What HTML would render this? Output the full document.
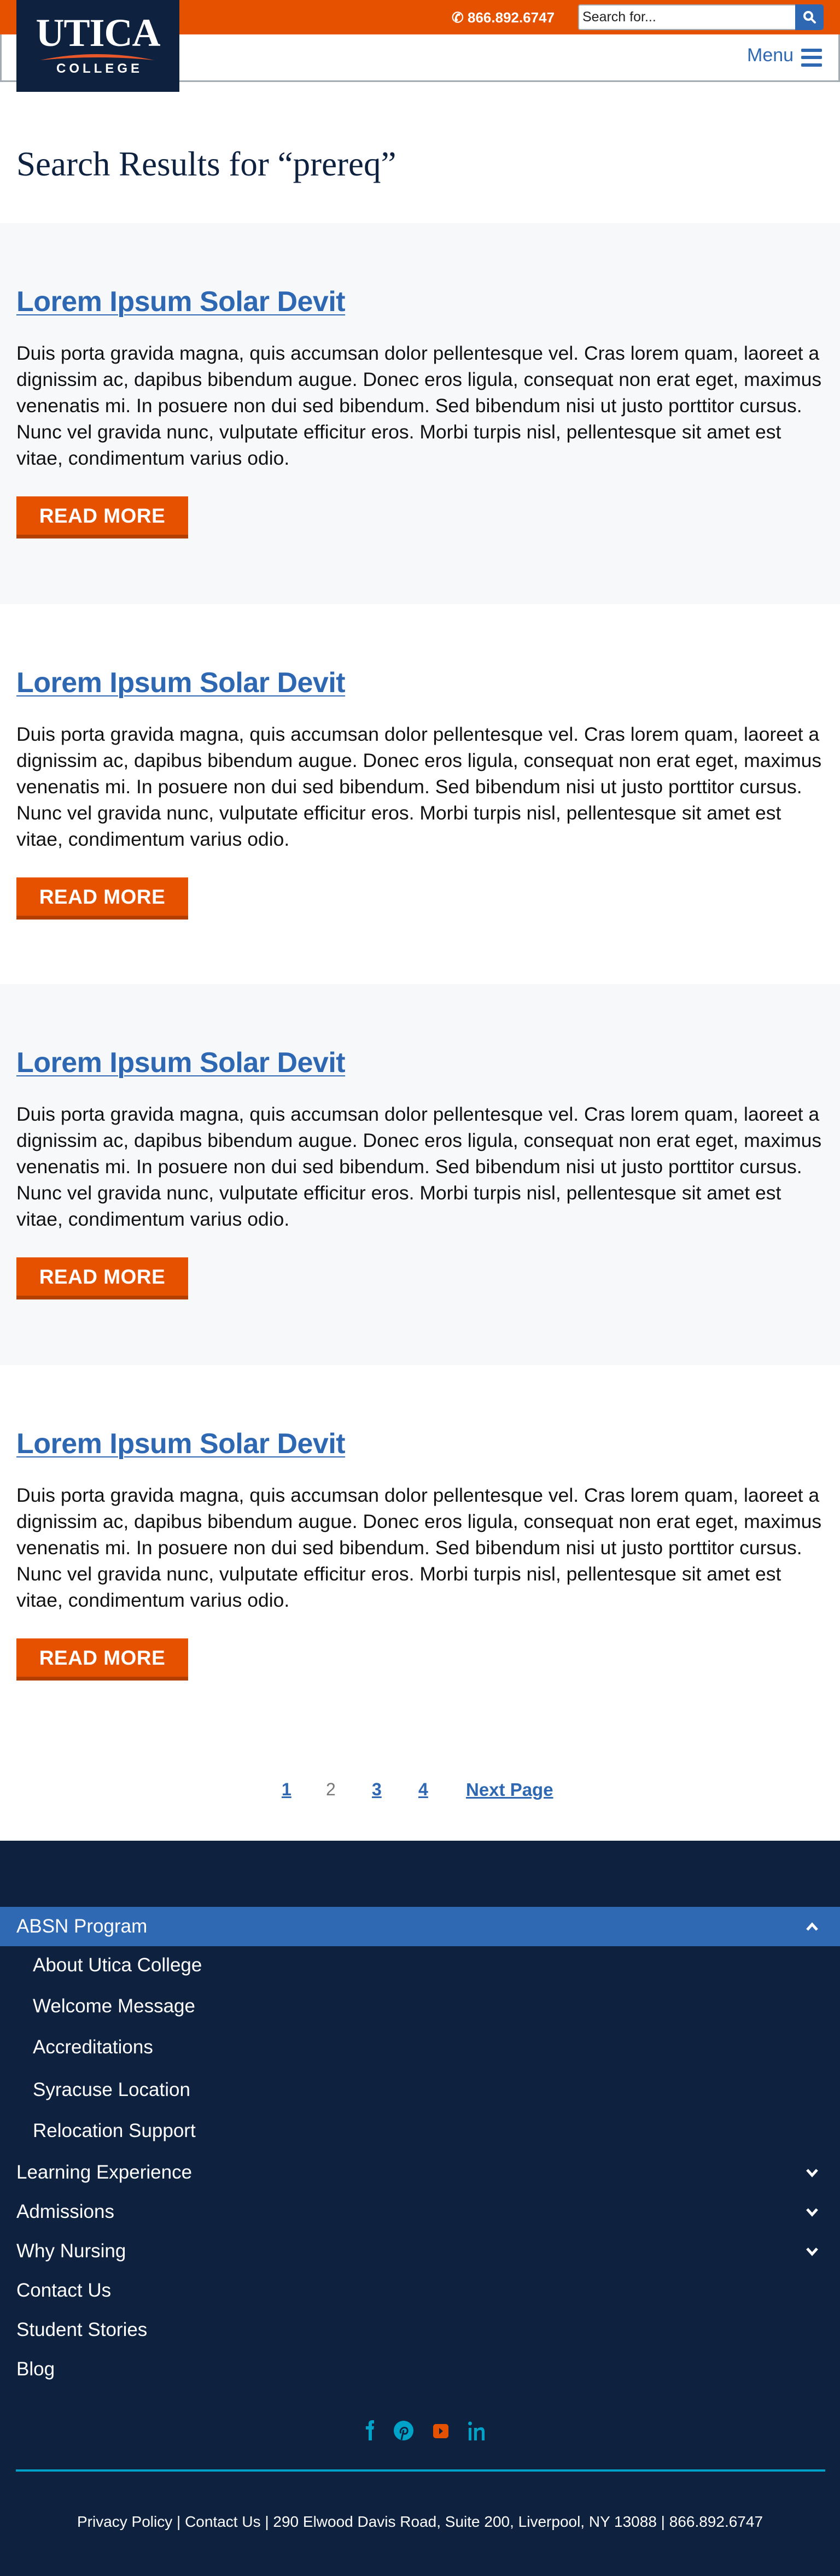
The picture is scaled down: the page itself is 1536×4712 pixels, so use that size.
<!DOCTYPE html>
<html><head><meta charset="utf-8"><style>
*{margin:0;padding:0;box-sizing:border-box}
body{width:1536px;height:4712px;font-family:"Liberation Sans",sans-serif;background:#fff;position:relative;overflow:hidden}
.a{position:absolute}
.top{left:0;top:0;width:1536px;height:63px;background:#e65100}
.nav{left:0;top:63px;width:1536px;height:87px;background:#fff;border:3px solid #a3acb3;border-top:none}
.logo{left:30px;top:0;width:298px;height:168px;background:#0e2240}
.sec{left:0;width:1536px;height:697px}
.gray{background:#f7f8fa}
h2{position:absolute;left:30px;font-size:52px;font-weight:bold;color:#2f68b2;text-decoration:underline;text-decoration-thickness:2px;text-underline-offset:6px;letter-spacing:-0.5px}
.p{position:absolute;left:30px;font-size:35.5px;line-height:48px;color:#111;white-space:nowrap;letter-spacing:0}
.btn{position:absolute;left:30px;width:314px;height:77px;background:#e65100;border-bottom:7px solid #b33f00;color:#fff;font-size:37px;font-weight:bold;line-height:72px;text-align:center;letter-spacing:0.5px}
.f{position:absolute;color:#fff;font-size:35px;line-height:40px}
.chev{position:absolute;left:1470px;width:30px;height:20px}
</style></head><body>
<div class="a top"></div>
<div class="a nav"></div>
<div class="a" style="left:826px;top:17px;color:#fff;font-size:26px;font-weight:bold">&#9990; 866.892.6747</div>
<div class="a" style="left:1057px;top:8px;width:400px;height:47px;background:#fff;border:2px solid #a3acb3;border-radius:4px 0 0 4px;font-size:25px;line-height:43px;padding-left:6px;color:#222">Search for...</div>
<div class="a" style="left:1454px;top:8px;width:52px;height:47px;background:#2f68b2;border-radius:0 5px 5px 0"></div>
<svg class="a" style="left:1466px;top:18px" width="30" height="28" viewBox="0 0 30 28"><circle cx="12" cy="11" r="7" fill="none" stroke="#fff" stroke-width="4"/><path d="M17 16l7 7" stroke="#fff" stroke-width="4" stroke-linecap="round"/></svg>
<div class="a" style="left:1366px;top:82px;font-size:34px;color:#2f68b2">Menu</div>
<div class="a" style="left:1465px;top:89px;width:38px;height:6px;background:#2f68b2;border-radius:2px"></div>
<div class="a" style="left:1465px;top:102px;width:38px;height:6px;background:#2f68b2;border-radius:2px"></div>
<div class="a" style="left:1465px;top:116px;width:38px;height:6px;background:#2f68b2;border-radius:2px"></div>
<div class="a logo"></div>
<div class="a" style="left:30px;top:20px;width:298px;text-align:center;color:#fff;font-family:'Liberation Serif',serif;font-weight:bold;font-size:72px;line-height:80px;letter-spacing:-1px">UTICA</div>
<svg class="a" style="left:74px;top:94px" width="208" height="18" viewBox="0 0 208 18"><path d="M0 16Q104-6 208 16Q104 6 0 16z" fill="#e8582a"/></svg>
<div class="a" style="left:30px;top:112px;width:298px;text-align:center;color:#fff;font-weight:bold;font-size:24px;letter-spacing:6px;padding-left:6px">COLLEGE</div>
<div class="a" style="left:30px;top:264px;font-family:'Liberation Serif',serif;font-size:63px;color:#0e2240">Search Results for “prereq”</div>

<div class="a sec gray" style="top:408px"></div>
<div class="a sec" style="top:1105px"></div>
<div class="a sec gray" style="top:1800px"></div>
<div class="a sec" style="top:2497px"></div>

<div id="cards"></div>
<script>
var tops=[408,1105,1800,2497];
var t='Duis porta gravida magna, quis accumsan dolor pellentesque vel. Cras lorem quam, laoreet a<br>dignissim ac, dapibus bibendum augue. Donec eros ligula, consequat non erat eget, maximus<br>venenatis mi. In posuere non dui sed bibendum. Sed bibendum nisi ut justo porttitor cursus.<br>Nunc vel gravida nunc, vulputate efficitur eros. Morbi turpis nisl, pellentesque sit amet est<br>vitae, condimentum varius odio.';
var h='';
tops.forEach(function(y){
h+='<h2 style="top:'+(y+114)+'px">Lorem Ipsum Solar Devit</h2>';
h+='<div class="p" style="top:'+(y+214)+'px">'+t+'</div>';
h+='<div class="btn" style="top:'+(y+500)+'px">READ MORE</div>';
});
document.getElementById('cards').innerHTML=h;
</script>

<div class="a" style="top:3255px;left:515px;font-size:32px;font-weight:bold;color:#2f68b2;text-decoration:underline">1</div>
<div class="a" style="top:3255px;left:596px;font-size:32px;color:#777">2</div>
<div class="a" style="top:3255px;left:680px;font-size:32px;font-weight:bold;color:#2f68b2;text-decoration:underline">3</div>
<div class="a" style="top:3255px;left:765px;font-size:32px;font-weight:bold;color:#2f68b2;text-decoration:underline">4</div>
<div class="a" style="top:3255px;left:852px;font-size:33px;font-weight:bold;color:#2f68b2;text-decoration:underline">Next Page</div>

<div class="a" style="left:0;top:3367px;width:1536px;height:1345px;background:#0e2240"></div>
<div class="a" style="left:0;top:3488px;width:1536px;height:72px;background:#2f69b3"></div>
<div class="f" style="left:30px;top:3504px">ABSN Program</div>
<svg class="chev" style="top:3514px" viewBox="0 0 30 20"><path d="M6 16L15 6L24 16" fill="none" stroke="#fff" stroke-width="5"/></svg>
<div class="f" style="left:60px;top:3575px">About Utica College</div>
<div class="f" style="left:60px;top:3650px">Welcome Message</div>
<div class="f" style="left:60px;top:3725px">Accreditations</div>
<div class="f" style="left:60px;top:3803px">Syracuse Location</div>
<div class="f" style="left:60px;top:3878px">Relocation Support</div>
<div class="f" style="left:30px;top:3954px">Learning Experience</div>
<svg class="chev" style="top:3965px" viewBox="0 0 30 20"><path d="M6 4L15 14L24 4" fill="none" stroke="#fff" stroke-width="5"/></svg>
<div class="f" style="left:30px;top:4026px">Admissions</div>
<svg class="chev" style="top:4037px" viewBox="0 0 30 20"><path d="M6 4L15 14L24 4" fill="none" stroke="#fff" stroke-width="5"/></svg>
<div class="f" style="left:30px;top:4098px">Why Nursing</div>
<svg class="chev" style="top:4109px" viewBox="0 0 30 20"><path d="M6 4L15 14L24 4" fill="none" stroke="#fff" stroke-width="5"/></svg>
<div class="f" style="left:30px;top:4170px">Contact Us</div>
<div class="f" style="left:30px;top:4242px">Student Stories</div>
<div class="f" style="left:30px;top:4314px">Blog</div>

<svg class="a" style="left:660px;top:4426px" width="240" height="40" viewBox="0 0 240 40">
<path d="M14 38V18h-5v-6h5V7c0-4 3-6 7-6h3v6h-3c-1 0-1 1-1 2v3h4l-1 6h-3v20z" fill="#00a3c8"/>
<circle cx="78" cy="20" r="18" fill="#00a3c8"/><path d="M74 37l4-18M73 25c-3-6 3-12 9-10 5 2 4 11-2 11-2 0-3-1-3-3" fill="none" stroke="#0e2240" stroke-width="3"/>
<rect x="132" y="8" width="28" height="26" rx="5" fill="#e65100"/><path d="M143 15l7 6-7 6z" fill="#0e2240"/>
<rect x="197" y="15" width="5" height="23" fill="#00a3c8"/><circle cx="199.5" cy="7" r="3.5" fill="#00a3c8"/><path d="M207 38V15h5v3c2-3 5-4 8-4 4 0 6 3 6 8v16h-5V23c0-3-1-4-3-4s-6 1-6 5v14z" fill="#00a3c8"/>
</svg>
<div class="a" style="left:29px;top:4517px;width:1480px;height:4px;background:#00a3c8"></div>
<div class="a" style="left:0;top:4597px;width:1536px;text-align:center;color:#fff;font-size:28px">Privacy Policy | Contact Us | 290 Elwood Davis Road, Suite 200, Liverpool, NY 13088 | 866.892.6747</div>
</body></html>
